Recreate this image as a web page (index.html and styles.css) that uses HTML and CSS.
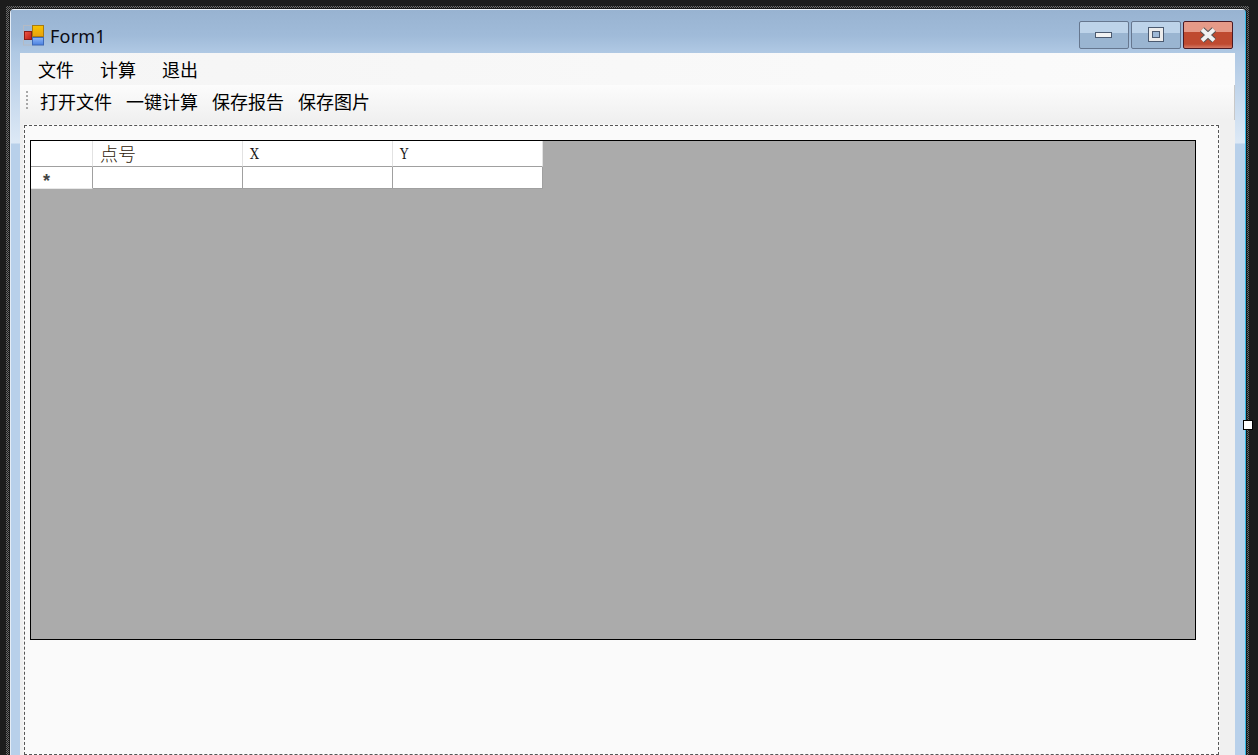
FILE: index.html
```html
<!DOCTYPE html>
<html lang="zh">
<head>
<meta charset="utf-8">
<title>Form1</title>
<link rel="stylesheet" href="styles.css">
</head>
<body>
<div class="frame">
  <div class="window">
    <header class="titlebar">
      <svg class="appicon" width="21" height="21" viewBox="0 0 21 21">
        <defs>
          <linearGradient id="gy" x1="0" y1="0" x2="0" y2="1"><stop offset="0" stop-color="#f8c400"/><stop offset="1" stop-color="#e8a010"/></linearGradient>
          <linearGradient id="gb" x1="0" y1="0" x2="0" y2="1"><stop offset="0" stop-color="#8fb8f8"/><stop offset="1" stop-color="#4a80e0"/></linearGradient>
          <linearGradient id="gr" x1="0" y1="0" x2="1" y2="1"><stop offset="0" stop-color="#f05a48"/><stop offset="1" stop-color="#b81c14"/></linearGradient>
        </defs>
        <rect x="0.5" y="0.5" width="20" height="19.5" fill="none" stroke="#b4bac4"/>
        <rect x="9.5" y="0.5" width="11" height="11" fill="url(#gy)" stroke="#a87a10"/>
        <rect x="9.5" y="12.5" width="11" height="7.5" fill="url(#gb)" stroke="#3d69b8"/>
        <rect x="1.5" y="6.5" width="7" height="8" fill="url(#gr)" stroke="#8a1e18"/>
      </svg>
      <span class="title">Form1</span>
      <div class="caption-buttons">
        <div class="capbtn">
          <svg width="18" height="8" viewBox="0 0 18 8"><rect x="0.5" y="1.5" width="16" height="5" fill="#f2f2f2" stroke="#4b5a70"/></svg>
        </div>
        <div class="capbtn">
          <svg width="18" height="16" viewBox="0 0 18 16"><rect x="1.5" y="0.5" width="15" height="14" fill="#ececec" stroke="#4b5a70"/><rect x="5.5" y="4.5" width="7" height="6" fill="#9db8d6" stroke="#4b5a70"/></svg>
        </div>
        <div class="capbtn close">
          <svg width="18" height="16" viewBox="0 0 18 16"><path d="M3 2.5 L15 13.5 M15 2.5 L3 13.5" stroke="#555" stroke-width="6" fill="none"/><path d="M3 2.5 L15 13.5 M15 2.5 L3 13.5" stroke="#f2f2f2" stroke-width="4" fill="none"/></svg>
        </div>
      </div>
    </header>
    <div class="client">
      <nav class="menubar">
        <span class="menuitem">文件</span>
        <span class="menuitem">计算</span>
        <span class="menuitem">退出</span>
      </nav>
      <div class="toolbar">
        <span class="grip"></span>
        <span class="tool">打开文件</span>
        <span class="tool">一键计算</span>
        <span class="tool">保存报告</span>
        <span class="tool">保存图片</span>
      </div>
      <main class="content">
        <div class="panel">
          <div class="datagrid">
            <div class="gridtable">
              <div class="cell head corner"></div>
              <div class="cell head cjk">点号</div>
              <div class="cell head">X</div>
              <div class="cell head">Y</div>
              <div class="cell rowhead">*</div>
              <div class="cell"></div>
              <div class="cell"></div>
              <div class="cell"></div>
            </div>
          </div>
        </div>
      </main>
    </div>
  </div>
</div>
<div class="handle"></div>
</body>
</html>
```

FILE: styles.css
```css
* { box-sizing: border-box; }
html, body { margin: 0; height: 100%; overflow: hidden; }
body {
  background: #1c1c1c;
  padding: 6px 0 0 6px;
  font-family: "Noto Sans CJK SC", "Noto Sans", sans-serif;
  color: #000;
}
.frame {
  width: 1243px;
  height: 749px;
  padding: 3px 3px 0 4px;
  background: repeating-conic-gradient(#6a6a6a 0 25%, #1c1c1c 0 50%) 0 0 / 2px 2px;
}
.window {
  height: 100%;
  display: flex;
  flex-direction: column;
  background: linear-gradient(#b0c9e4 44px, #dde9f6 133px, #b8d0ea 134px);
  border-top: 1px solid #eef4fa;
  border-left: 1px solid #e4ecf5;
  border-right: 1px solid #2fb6e4;
  border-top-left-radius: 4px;
  border-top-right-radius: 4px;
  box-shadow: 0 0 0 1px #1c1c1c;
}
.titlebar {
  height: 43px;
  flex: none;
  display: flex;
  align-items: flex-start;
  padding: 15px 12px 0 12px;
  background: linear-gradient(#98b3d1, #a0bbd9 60%, #b0c9e4);
}
.appicon { flex: none; margin-right: 6px; }
.title {
  font-size: 18px;
  letter-spacing: 0.2px;
  line-height: 24px;
  margin-top: -1px;
  font-family: "Noto Sans", sans-serif;
  color: #0b0b14;
}
.caption-buttons { margin-left: auto; margin-top: -4px; display: flex; gap: 2px; }
.capbtn {
  width: 50px;
  height: 28px;
  display: flex;
  align-items: center;
  justify-content: center;
  border: 1px solid #66778f;
  border-radius: 2px;
  background: linear-gradient(#bdd3e9 0 42%, #9ab5d1 42% 100%);
}
.capbtn.close {
  border-color: #4a1a24;
  background: linear-gradient(#e59a88 0 40%, #bf4a30 40% 85%, #d57a66 100%);
}
.client {
  flex: 1;
  margin: 0 10px 0 9px;
  display: flex;
  flex-direction: column;
  background: #f0f0f0;
  min-height: 0;
}
.menubar {
  height: 32px;
  flex: none;
  display: flex;
  align-items: center;
  padding-left: 18px;
  gap: 26px;
  background: linear-gradient(90deg, #f5f5f5, #fbfbfb);
  font-size: 18px;
  line-height: 32px;
}
.menuitem { width: 36px; white-space: nowrap; }
.toolbar {
  height: 35px;
  flex: none;
  display: flex;
  align-items: center;
  padding: 0 0 4px 6px;
  gap: 14px;
  background: linear-gradient(#fcfcfc, #f0f0f0);
  border-right: 1px solid #c8c8c8;
  font-size: 18px;
}
.grip {
  width: 2px;
  height: 19px;
  margin-right: -2px;
  background: repeating-linear-gradient(#a8a8a8 0 2px, transparent 2px 4px);
}
.tool { white-space: nowrap; }
.content { flex: 1; padding: 5px 16px 0 4px; background: #f0f0f0; min-height: 0; }
.panel {
  height: 100%;
  padding: 14px 22px 0 5px;
  background: #fafafa;
  border: 1px dashed #555;
  outline: 1px solid #f6f6f6;
}
.datagrid {
  width: 1166px;
  height: 500px;
  background: #ababab;
  border: 1px solid #000;
}
.gridtable {
  display: grid;
  grid-template-columns: 62px repeat(3, 150px);
  grid-template-rows: 26px 22px;
  width: 512px;
}
.cell {
  background: #fff;
  border-right: 1px solid #a0a0a0;
  border-bottom: 1px solid #a0a0a0;
  padding-left: 7px;
  font-family: "DejaVu Serif", "Liberation Serif", serif;
  font-stretch: condensed;
  font-size: 14px;
  line-height: 26px;
  color: #1a1a1a;
}
.cell.head { border-right-color: #e2e2e2; }
.cell.cjk {
  font-family: "Noto Sans CJK SC", sans-serif;
  font-size: 18px;
  font-weight: 300;
  line-height: 24px;
  color: #2e2008;
}
.cell.rowhead {
  padding-left: 12px;
  font-family: "Liberation Sans", sans-serif;
  font-weight: bold;
  font-size: 18px;
  line-height: 29px;
  color: #444;
  border-bottom-color: #e8e8e8;
}
.handle {
  position: absolute;
  left: 1243px;
  top: 420px;
  width: 10px;
  height: 10px;
  background: #fff;
  border: 1px solid #000;
}
```
